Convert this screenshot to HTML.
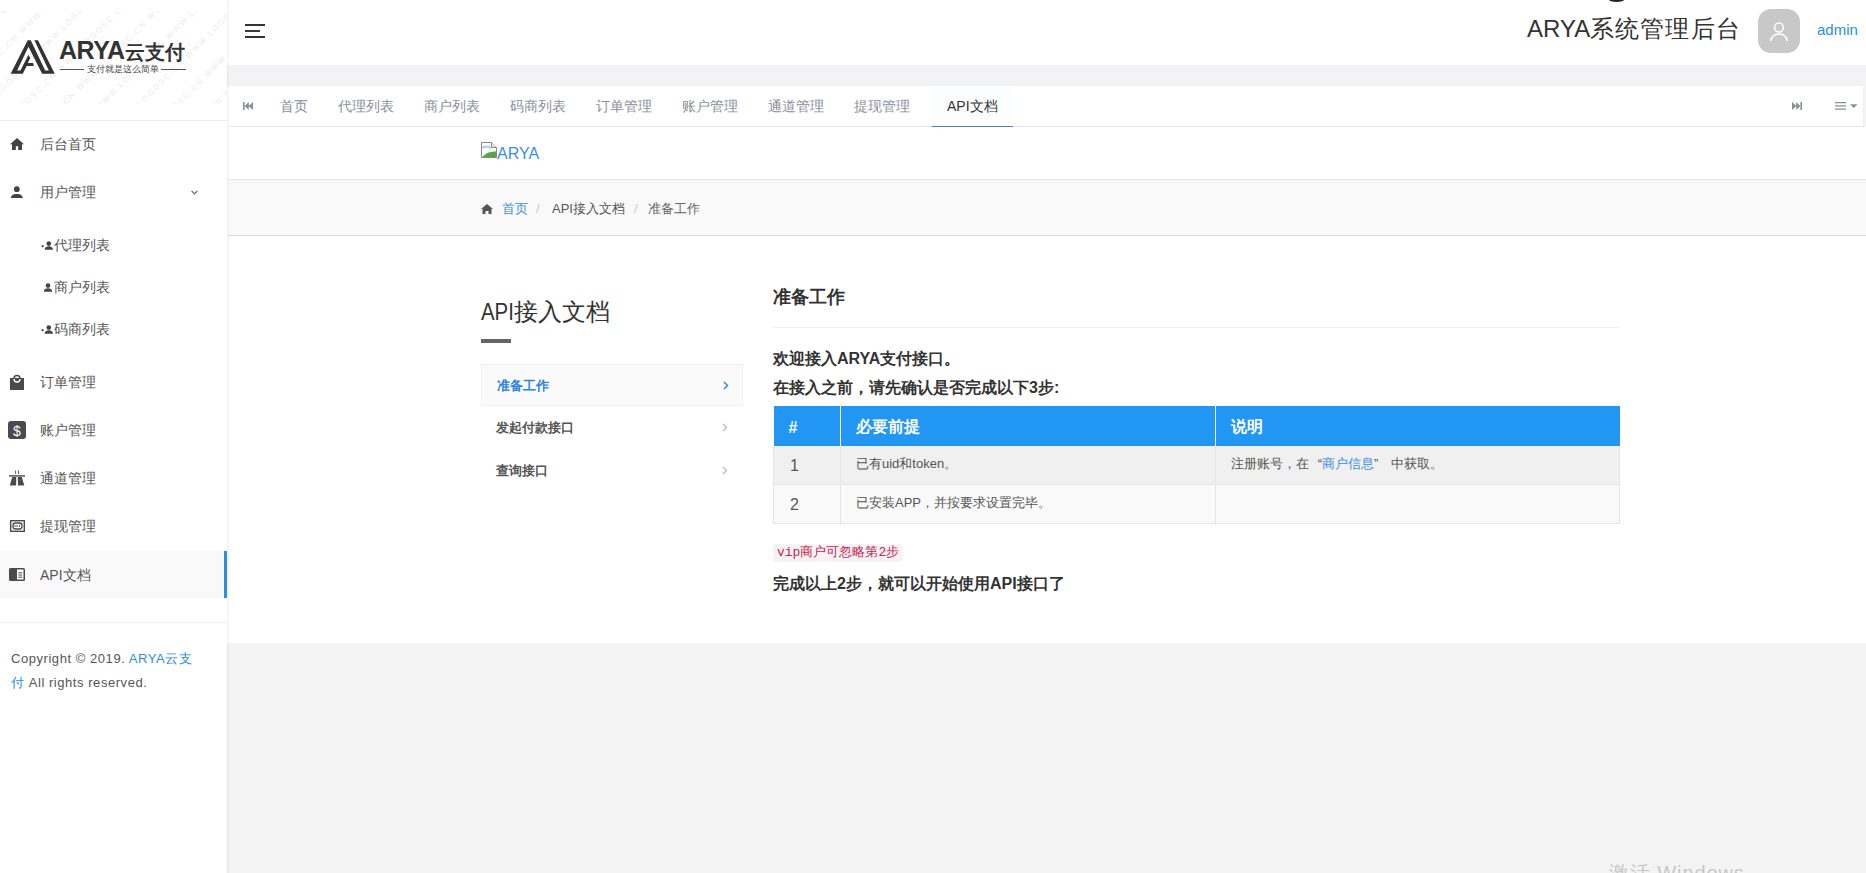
<!DOCTYPE html>
<html><head><meta charset="utf-8">
<style>
*{margin:0;padding:0;box-sizing:border-box}
html,body{width:1866px;height:873px;overflow:hidden;background:#f4f4f4;font-family:"Liberation Sans",sans-serif;color:#333}
.abs{position:absolute;white-space:nowrap}
#side{position:absolute;left:0;top:0;width:227px;height:873px;background:#fff}
#logo{position:absolute;left:0;top:0;width:227px;height:121px;border-bottom:1px solid #ececec;overflow:hidden}
.mi{position:absolute;left:0;width:227px;height:48px;font-size:14px;color:#555;line-height:48px}
.mi .t{position:absolute;left:40px;top:0}
.mi svg{position:absolute}
.sub{position:absolute;left:41px;font-size:14px;color:#555;line-height:20px;white-space:nowrap}
.sub svg{vertical-align:-1px}
#hdr{position:absolute;left:228px;top:0;width:1638px;height:65px;background:#fff;box-shadow:-1px 0 0 #fff}
#band{position:absolute;left:228px;top:65px;width:1638px;height:21px;background:#f3f3f6;box-shadow:-1px 0 0 #f3f3f6}
#tabs{position:absolute;left:228px;top:86px;width:1636px;height:41px;background:#fff;border-bottom:1px solid #e8e8e8;border-right:1px solid #f0f0f0;box-shadow:-1px 0 0 #fff}
.tab{position:absolute;top:0;height:40px;line-height:40px;font-size:14px;color:#8a8e99;white-space:nowrap}
#content{position:absolute;left:228px;top:127px;width:1638px;height:516px;background:#fff;box-shadow:-1px 0 0 #fff}
#crumb{position:absolute;left:0;top:52px;width:1638px;height:57px;background:#f9f9f9;border-top:1px solid #e6e6e6;border-bottom:1px solid #dcdcdc}
.nav{position:absolute;left:253px;width:262px;height:42px;line-height:41px;font-size:13px;font-weight:bold;color:#555}
.nav .t{position:absolute;left:15px}
.nav svg{position:absolute;left:241px;top:16px}
table{border-collapse:collapse;position:absolute;left:545px;top:279px;width:847px;font-size:13px;color:#555}
th{background:#2196f3;color:#fff;font-size:16px;font-weight:bold;text-align:left;height:40px;padding:3px 15px 0;border-left:1px solid #fff}
th:first-child{border-left:0}
td{height:38px;padding:0 15px 1px;border:1px solid #e5e5e5}
tr.r1 td{border-top:0}
tr.r1 td{background:#f0f0f0}
tr.r2 td{background:#f9f9f9;height:39px}
td.n{font-size:16px;padding-left:16px;padding-bottom:0;padding-top:2px}
.q{display:inline-block;width:13px}
</style></head><body>

<div id="side">
  <div id="logo">
    <svg class="abs" style="left:0;top:11px" width="228" height="93" viewBox="0 0 228 93"><g transform="rotate(-45)" font-family="Liberation Sans" font-size="8" fill="#ebebeb" letter-spacing="1.8"><text x="-300" y="-103" xml:space="preserve">WWW.LOGOSC.CN WWW.LOGOSC.CN WWW.LOGOSC.CN WWW.LOGOSC.CN WWW.LOGOSC.CN WWW.LOGOSC.CN</text><text x="-300" y="-76" xml:space="preserve">WWW.LOGOSC.CN WWW.LOGOSC.CN WWW.LOGOSC.CN WWW.LOGOSC.CN WWW.LOGOSC.CN WWW.LOGOSC.CN</text><text x="-300" y="-49" xml:space="preserve">WWW.LOGOSC.CN WWW.LOGOSC.CN WWW.LOGOSC.CN WWW.LOGOSC.CN WWW.LOGOSC.CN WWW.LOGOSC.CN</text><text x="-300" y="-22" xml:space="preserve">WWW.LOGOSC.CN WWW.LOGOSC.CN WWW.LOGOSC.CN WWW.LOGOSC.CN WWW.LOGOSC.CN WWW.LOGOSC.CN</text><text x="-300" y="5" xml:space="preserve">WWW.LOGOSC.CN WWW.LOGOSC.CN WWW.LOGOSC.CN WWW.LOGOSC.CN WWW.LOGOSC.CN WWW.LOGOSC.CN</text><text x="-300" y="32" xml:space="preserve">WWW.LOGOSC.CN WWW.LOGOSC.CN WWW.LOGOSC.CN WWW.LOGOSC.CN WWW.LOGOSC.CN WWW.LOGOSC.CN</text><text x="-300" y="59" xml:space="preserve">WWW.LOGOSC.CN WWW.LOGOSC.CN WWW.LOGOSC.CN WWW.LOGOSC.CN WWW.LOGOSC.CN WWW.LOGOSC.CN</text><text x="-300" y="86" xml:space="preserve">WWW.LOGOSC.CN WWW.LOGOSC.CN WWW.LOGOSC.CN WWW.LOGOSC.CN WWW.LOGOSC.CN WWW.LOGOSC.CN</text><text x="-300" y="113" xml:space="preserve">WWW.LOGOSC.CN WWW.LOGOSC.CN WWW.LOGOSC.CN WWW.LOGOSC.CN WWW.LOGOSC.CN WWW.LOGOSC.CN</text><text x="-300" y="140" xml:space="preserve">WWW.LOGOSC.CN WWW.LOGOSC.CN WWW.LOGOSC.CN WWW.LOGOSC.CN WWW.LOGOSC.CN WWW.LOGOSC.CN</text><text x="-300" y="167" xml:space="preserve">WWW.LOGOSC.CN WWW.LOGOSC.CN WWW.LOGOSC.CN WWW.LOGOSC.CN WWW.LOGOSC.CN WWW.LOGOSC.CN</text><text x="-300" y="194" xml:space="preserve">WWW.LOGOSC.CN WWW.LOGOSC.CN WWW.LOGOSC.CN WWW.LOGOSC.CN WWW.LOGOSC.CN WWW.LOGOSC.CN</text><text x="-300" y="221" xml:space="preserve">WWW.LOGOSC.CN WWW.LOGOSC.CN WWW.LOGOSC.CN WWW.LOGOSC.CN WWW.LOGOSC.CN WWW.LOGOSC.CN</text><text x="-300" y="248" xml:space="preserve">WWW.LOGOSC.CN WWW.LOGOSC.CN WWW.LOGOSC.CN WWW.LOGOSC.CN WWW.LOGOSC.CN WWW.LOGOSC.CN</text><text x="-300" y="275" xml:space="preserve">WWW.LOGOSC.CN WWW.LOGOSC.CN WWW.LOGOSC.CN WWW.LOGOSC.CN WWW.LOGOSC.CN WWW.LOGOSC.CN</text><text x="-300" y="302" xml:space="preserve">WWW.LOGOSC.CN WWW.LOGOSC.CN WWW.LOGOSC.CN WWW.LOGOSC.CN WWW.LOGOSC.CN WWW.LOGOSC.CN</text><text x="-300" y="329" xml:space="preserve">WWW.LOGOSC.CN WWW.LOGOSC.CN WWW.LOGOSC.CN WWW.LOGOSC.CN WWW.LOGOSC.CN WWW.LOGOSC.CN</text><text x="-300" y="356" xml:space="preserve">WWW.LOGOSC.CN WWW.LOGOSC.CN WWW.LOGOSC.CN WWW.LOGOSC.CN WWW.LOGOSC.CN WWW.LOGOSC.CN</text><text x="-300" y="383" xml:space="preserve">WWW.LOGOSC.CN WWW.LOGOSC.CN WWW.LOGOSC.CN WWW.LOGOSC.CN WWW.LOGOSC.CN WWW.LOGOSC.CN</text><text x="-300" y="410" xml:space="preserve">WWW.LOGOSC.CN WWW.LOGOSC.CN WWW.LOGOSC.CN WWW.LOGOSC.CN WWW.LOGOSC.CN WWW.LOGOSC.CN</text></g></svg>
    <svg class="abs" style="left:5px;top:35px" width="55" height="45" viewBox="0 0 1067 873"><path d="M110 750L440 100L500 100L780 690L850 690L570 100L640 100L965 750L720 750L455 230L235 690L300 690L455 385L490 450L440 545L545 545L560 600L420 600L345 750Z" fill="#333"/></svg>
    <div class="abs" style="left:59px;top:36px;font-size:25px;line-height:28px;font-weight:bold;color:#333;letter-spacing:-0.5px">ARYA<span style="font-size:20px;letter-spacing:0">云支付</span></div>
    <div class="abs" style="left:60px;top:69px;width:24px;height:1px;background:#555"></div>
    <div class="abs" style="left:161px;top:69px;width:25px;height:1px;background:#555"></div>
    <div class="abs" style="left:87px;top:63px;font-size:9px;line-height:12px;color:#444;letter-spacing:0px">支付就是这么简单</div>
  </div>
  <div class="mi" style="top:120px"><svg style="left:10px;top:18px" width="14" height="12" viewBox="0 0 14 12"><path d="M7 0L0 6.2h2V12h3.8V8.3h2.4V12H12V6.2h2z" fill="#444"/></svg><span class="t">后台首页</span></div>
  <div class="mi" style="top:168px"><svg style="left:10px;top:17px" width="14" height="13" viewBox="0 0 14 13"><circle cx="6.8" cy="4.2" r="2.9" fill="#444"/><path d="M0.8 13.2c0-2.8 2.4-4.3 6-4.3s6 1.5 6 4.3z" fill="#444"/></svg><span class="t">用户管理</span>
    <svg style="left:191px;top:22px" width="7" height="5" viewBox="0 0 7 5"><path d="M0.6 0.8L3.5 3.8L6.4 0.8" stroke="#666" stroke-width="1.2" fill="none"/></svg></div>
  <div class="sub" style="top:235px"><svg width="13" height="11" viewBox="0 0 13 11"><circle cx="7.8" cy="3.6" r="2.3" fill="#444"/><path d="M3.6 9.8c0-2.4 1.8-3.6 4.2-3.6s4.2 1.2 4.2 3.6z" fill="#444"/><circle cx="1.6" cy="6.2" r="1.1" fill="#444"/></svg>代理列表</div>
  <div class="sub" style="top:277px"><svg width="13" height="11" viewBox="0 0 13 11"><circle cx="7" cy="3.6" r="2.3" fill="#444"/><path d="M2.8 9.8c0-2.4 1.8-3.6 4.2-3.6s4.2 1.2 4.2 3.6z" fill="#444"/></svg>商户列表</div>
  <div class="sub" style="top:319px"><svg width="13" height="11" viewBox="0 0 13 11"><circle cx="7.8" cy="3.6" r="2.3" fill="#444"/><path d="M3.6 9.8c0-2.4 1.8-3.6 4.2-3.6s4.2 1.2 4.2 3.6z" fill="#444"/><circle cx="1.6" cy="6.2" r="1.1" fill="#444"/></svg>码商列表</div>
  <div class="mi" style="top:358px"><svg style="left:10px;top:16px" width="14" height="16" viewBox="0 0 14 16"><path d="M0 4h14v12H0z" fill="#4a4a52"/><path d="M4 4.5a3 3 0 0 1 6 0" stroke="#4a4a52" stroke-width="1.6" fill="none"/><path d="M4 5a3 3 0 0 0 6 0" stroke="#fff" stroke-width="1.4" fill="none"/></svg><span class="t">订单管理</span></div>
  <div class="mi" style="top:406px"><svg style="left:8px;top:15px" width="18" height="18" viewBox="0 0 18 18"><rect x="0" y="0" width="18" height="18" rx="3" fill="#4a4a52"/><text x="9" y="14.5" font-size="14" font-family="Liberation Sans" fill="#fff" text-anchor="middle">$</text></svg><span class="t">账户管理</span></div>
  <div class="mi" style="top:454px"><svg style="left:9px;top:16px" width="16" height="16" viewBox="0 0 16 16"><path d="M6.2 0.5h0.9v3.5h-0.9z M9.1 0.5h0.9v3.5h-0.9z" fill="#4a4a52"/><path d="M0 5.2h16v1.4H0z" fill="#4a4a52"/><path d="M3.3 7h4L7.1 15.6H0.8z M8.8 7h4l2.5 8.6H9z" fill="#4a4a52"/></svg><span class="t">通道管理</span></div>
  <div class="mi" style="top:502px"><svg style="left:10px;top:18px" width="15" height="12" viewBox="0 0 15 12"><rect x="0.7" y="0.7" width="13.6" height="10.6" fill="none" stroke="#4a4a52" stroke-width="1.4"/><rect x="3" y="3" width="9" height="6" rx="2.5" fill="none" stroke="#4a4a52" stroke-width="1.3"/><path d="M5 5v2M7 5v2M9.5 5v2" stroke="#4a4a52" stroke-width="0.9"/></svg><span class="t">提现管理</span></div>
  <div class="mi" style="top:551px;height:47px;background:#f9f9fa;border-right:3px solid #2b8ee0"><svg style="left:9px;top:17px" width="16" height="13" viewBox="0 0 16 13"><rect x="0" y="0" width="16" height="13" rx="1.5" fill="#4a4a52"/><rect x="8" y="1.5" width="6.5" height="10" fill="#fff"/><path d="M9.3 4.8h4M9.3 7h4M9.3 9.2h4" stroke="#4a4a52" stroke-width="1"/></svg><span class="t">API文档</span></div>
  <div class="abs" style="left:0;top:622px;width:227px;height:1px;background:#f0f0f0"></div>
  <div class="abs" style="left:11px;top:647px;width:210px;font-size:13px;line-height:24px;color:#555;white-space:nowrap;letter-spacing:0.55px">Copyright © 2019. <span style="color:#2b8ee0">ARYA云支<br>付</span> All rights reserved.</div>
</div>

<div id="hdr">
  <div class="abs" style="left:1381px;top:-3px;width:15px;height:4.5px;border-radius:50%;background:#222"></div>
  <div class="abs" style="left:17px;top:24px;width:20px;height:2px;background:#333"></div>
  <div class="abs" style="left:17px;top:30px;width:15px;height:2px;background:#3a3a3a"></div>
  <div class="abs" style="left:17px;top:36px;width:20px;height:2px;background:#333"></div>
  <div class="abs" style="left:1299px;top:12px;font-size:24px;line-height:34px;color:#333">ARYA<span style="letter-spacing:1.1px">系统管理后台</span></div>
  <div class="abs" style="left:1530px;top:9px;width:42px;height:44px;border-radius:13px;background:#c8c8c8"></div>
  <svg class="abs" style="left:1540px;top:20px" width="22" height="22" viewBox="0 0 22 22"><circle cx="11" cy="7.5" r="4.4" fill="none" stroke="#fff" stroke-width="1.5"/><path d="M2.5 21c1-4.5 4-7 8.5-7s7.5 2.5 8.5 7" fill="none" stroke="#fff" stroke-width="1.5"/></svg>
  <div class="abs" style="left:1589px;top:19px;font-size:15px;line-height:22px;color:#2b8ee0">admin</div>
</div>
<div id="band"></div>
<div id="tabs">
  <svg class="abs" style="left:15px;top:16px" width="10" height="8" viewBox="0 0 10 8"><path d="M0 0h1.6v8H0z M1.6 4L5.8 0v8z M5.6 4L10 0v8z" fill="#8a8e99"/></svg>
  <div class="tab" style="left:52px">首页</div>
  <div class="tab" style="left:110px">代理列表</div>
  <div class="tab" style="left:196px">商户列表</div>
  <div class="tab" style="left:282px">码商列表</div>
  <div class="tab" style="left:368px">订单管理</div>
  <div class="tab" style="left:454px">账户管理</div>
  <div class="tab" style="left:540px">通道管理</div>
  <div class="tab" style="left:626px">提现管理</div>
  <div class="abs" style="left:704px;top:0;width:81px;height:41px;background:#fcfdfe;border-bottom:1px solid #4a80b4"></div>
  <div class="tab" style="left:719px;color:#333">API文档</div>
  <svg class="abs" style="left:1564px;top:16px" width="10" height="8" viewBox="0 0 10 8"><path d="M10 0H8.4v8H10z M8.4 4L4.2 0v8z M4.4 4L0 0v8z" fill="#8a8e99"/></svg>
  <svg class="abs" style="left:1607px;top:16px" width="23" height="8" viewBox="0 0 23 8"><path d="M0 0.5h11M0 3.8h11M0 7.1h11" stroke="#8a8e99" stroke-width="1.3"/><path d="M15 2.3h7.5L18.75 6z" fill="#8a8e99"/></svg>
</div>
<div id="content">
  <svg class="abs" style="left:253px;top:15px" width="16" height="16" viewBox="0 0 16 16"><path d="M0.5 0.5h10l5 5v10h-15z" fill="#fff" stroke="#888"/><path d="M10.5 0.5v5h5" fill="#eee" stroke="#888"/><path d="M1 15.5c3-4 7-6 14-6v6z" fill="#5ea54a"/><path d="M1 6c3-2 6-2 9 0" stroke="#a8c8e8" stroke-width="2" fill="none"/></svg>
  <div class="abs" style="left:269px;top:17px;font-size:16px;line-height:20px;color:#3a8ee6">ARYA</div>
  <div id="crumb">
    <svg class="abs" style="left:253px;top:24px" width="12" height="10" viewBox="0 0 12 10"><path d="M6 0L0 5h1.5v5h3V7h3v3h3V5H12z" fill="#555"/></svg>
    <div class="abs" style="left:274px;top:19px;font-size:13px;line-height:20px;color:#3a8ee6">首页</div>
    <div class="abs" style="left:308px;top:19px;font-size:13px;line-height:20px;color:#ccc">/</div>
    <div class="abs" style="left:324px;top:19px;font-size:13px;line-height:20px;color:#555">API接入文档</div>
    <div class="abs" style="left:406px;top:19px;font-size:13px;line-height:20px;color:#ccc">/</div>
    <div class="abs" style="left:420px;top:19px;font-size:13px;line-height:20px;color:#666">准备工作</div>
  </div>
  <div class="abs" style="left:253px;top:168px;font-size:24px;line-height:34px;color:#333"><span style="display:inline-block;transform:scaleX(0.85);transform-origin:0 0;margin-right:-6px">API</span>接入文档</div>
  <div class="abs" style="left:253px;top:212px;width:30px;height:4px;background:#666"></div>
  <div class="nav" style="top:237px;height:42px;background:#fafafa;border:1px solid #f0f0f0;color:#2d84d8"><span class="t">准备工作</span><svg width="6" height="9" viewBox="0 0 6 9"><path d="M1 1l3.5 3.5L1 8" stroke="#3a8ee6" stroke-width="1.6" fill="none"/></svg></div>
  <div class="nav" style="top:280px"><span class="t">发起付款接口</span><svg width="6" height="9" viewBox="0 0 6 9"><path d="M1 1l3.5 3.5L1 8" stroke="#bbb" stroke-width="1.4" fill="none"/></svg></div>
  <div class="nav" style="top:323px"><span class="t">查询接口</span><svg width="6" height="9" viewBox="0 0 6 9"><path d="M1 1l3.5 3.5L1 8" stroke="#bbb" stroke-width="1.4" fill="none"/></svg></div>

  <div class="abs" style="left:545px;top:157px;font-size:18px;line-height:26px;font-weight:bold;color:#333">准备工作</div>
  <div class="abs" style="left:545px;top:200px;width:847px;height:1px;background:#eee"></div>
  <div class="abs" style="left:545px;top:217px;font-size:16px;line-height:29px;font-weight:bold;color:#333">欢迎接入ARYA支付接口。<br>在接入之前，请先确认是否完成以下3步:</div>
  <table>
    <tr><th style="width:67px">#</th><th style="width:375px">必要前提</th><th>说明</th></tr>
    <tr class="r1"><td class="n">1</td><td>已有uid和token。</td><td>注册账号，在<span class="q" style="text-align:right">“</span><span style="color:#3a8ee6">商户信息</span><span class="q">”</span> 中获取。</td></tr>
    <tr class="r2"><td class="n">2</td><td>已安装APP，并按要求设置完毕。</td><td></td></tr>
  </table>
  <div class="abs" style="left:545px;top:417px;height:18px;padding:0 4px;background:#f9f2f4;border-radius:3px;color:#c7254e;font-size:13px;line-height:18px;font-family:'Liberation Mono',monospace">vip商户可忽略第2步</div>
  <div class="abs" style="left:545px;top:444px;font-size:16px;line-height:26px;font-weight:bold;color:#333">完成以上2步，就可以开始使用API接口了</div>
</div>
<div class="abs" style="left:1609px;top:860px;font-size:20px;line-height:26px;color:#c8c8c8;letter-spacing:0.9px">激活 Windows</div>
<div class="abs" style="left:227px;top:0;width:1px;height:873px;background:rgba(0,0,0,0.042)"></div>
<div class="abs" style="left:228px;top:0;width:1px;height:873px;background:rgba(0,0,0,0.025)"></div>
</body></html>
